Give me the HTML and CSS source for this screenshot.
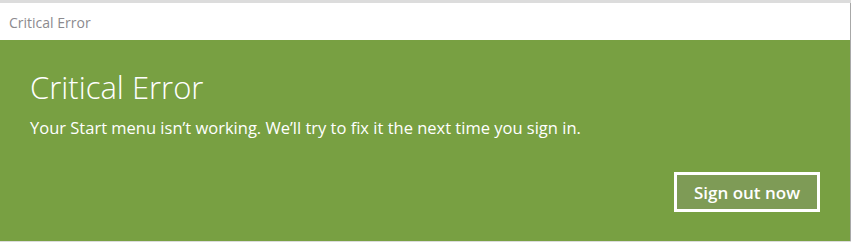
FILE: index.html
```html
<!DOCTYPE html>
<html>
<head>
<meta charset="utf-8">
<link rel="stylesheet" href="styles.css">
</head>
<body>
<div class="screen">
  <div class="window">
    <div class="titlebar"><span class="title">Critical Error</span></div>
    <div class="panel">
      <h1 class="heading">Critical Error</h1>
      <p class="message">Your Start menu isn’t working. We’ll try to fix it the next time you sign in.</p>
      <div class="actions">
        <button class="btn">Sign out now</button>
      </div>
    </div>
  </div>
</div>
</body>
</html>
```
FILE: styles.css
```css
html, body {
  margin: 0;
  padding: 0;
  width: 851px;
  height: 242px;
  overflow: hidden;
  background: #c8c8c8;
}
.screen {
  padding-top: 3px;
  background: #dcdcdc;
  height: 242px;
  box-sizing: border-box;
}
.window {
  width: 850px;
  height: 238px;
  border-right: 1px solid #a8a8a8;
  box-sizing: content-box;
  display: flex;
  flex-direction: column;
  font-family: "Open Sans", "Noto Sans", sans-serif;
}
.titlebar {
  height: 37px;
  background: #ffffff;
  display: flex;
  align-items: center;
  padding-left: 9px;
}
.title {
  font-size: 14px;
  color: #8c8a8e;
  margin-top: 1px;
}
.panel {
  flex: 1;
  background: #78a042;
  color: #ffffff;
  padding: 0 30px 0 30px;
  display: flex;
  flex-direction: column;
}
.heading {
  margin: 27px 0 0 0;
  font-weight: 300;
  font-size: 31px;
  line-height: 40px;
}
.message {
  margin: 10px 0 0 0;
  font-size: 16.5px;
  line-height: 22px;
}
.actions {
  display: flex;
  justify-content: flex-end;
  margin-top: 33px;
}
.btn {
  width: 146px;
  height: 40px;
  box-sizing: border-box;
  border: 3px solid #ffffff;
  background: #7e9b56;
  color: #ffffff;
  font-family: "Open Sans", "Noto Sans", sans-serif;
  font-weight: 600;
  font-size: 17px;
  padding: 0;
  margin-right: 0;
}
```
